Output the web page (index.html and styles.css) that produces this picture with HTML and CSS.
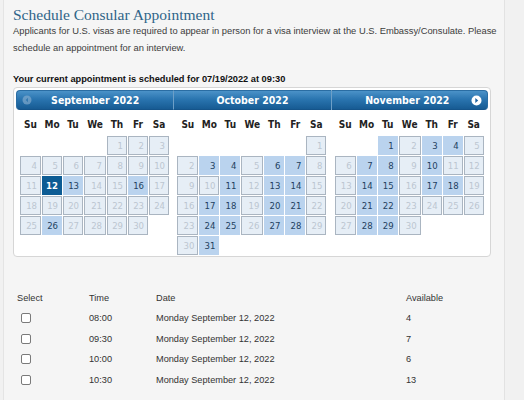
FILE: index.html
```html
<!DOCTYPE html>
<html lang="en">
<head>
<meta charset="utf-8">
<title>Schedule Consular Appointment</title>
<link rel="stylesheet" href="styles.css">
</head>
<body>
<main class="page">
  <h1 class="title">Schedule Consular Appointment</h1>
  <p class="intro">Applicants for U.S. visas are required to appear in person for a visa interview at the U.S. Embassy/Consulate. Please schedule an appointment for an interview.</p>
  <p class="current">Your current appointment is scheduled for 07/19/2022 at 09:30</p>

  <div class="datepicker">
    <section class="group first">
      <div class="dp-header">
        <span class="nav prev" title="Prev">
          <svg width="10" height="10" viewBox="0 0 10 10"><circle cx="5" cy="5" r="4.5" fill="#8fb3d2"/><path d="M6 2.8 L3.6 5 L6 7.2 Z" fill="#3f7fb3"/></svg>
        </span>
        <span class="month">September 2022</span>
      </div>
      <div class="names"><span>Su</span><span>Mo</span><span>Tu</span><span>We</span><span>Th</span><span>Fr</span><span>Sa</span></div>
      <div class="days">
        <span class="e"></span><span class="e"></span><span class="e"></span><span class="e"></span><span class="d">1</span><span class="d">2</span><span class="d">3</span>
        <span class="d">4</span><span class="d">5</span><span class="d">6</span><span class="d">7</span><span class="d">8</span><span class="d">9</span><span class="d">10</span>
        <span class="d">11</span><span class="sel">12</span><span class="a">13</span><span class="d">14</span><span class="d">15</span><span class="a">16</span><span class="d">17</span>
        <span class="d">18</span><span class="d">19</span><span class="d">20</span><span class="d">21</span><span class="d">22</span><span class="d">23</span><span class="d">24</span>
        <span class="d">25</span><span class="a">26</span><span class="d">27</span><span class="d">28</span><span class="d">29</span><span class="d">30</span>
      </div>
    </section>
    <section class="group">
      <div class="dp-header">
        <span class="month">October 2022</span>
      </div>
      <div class="names"><span>Su</span><span>Mo</span><span>Tu</span><span>We</span><span>Th</span><span>Fr</span><span>Sa</span></div>
      <div class="days">
        <span class="e"></span><span class="e"></span><span class="e"></span><span class="e"></span><span class="e"></span><span class="e"></span><span class="d">1</span>
        <span class="d">2</span><span class="a">3</span><span class="a">4</span><span class="d">5</span><span class="a">6</span><span class="a">7</span><span class="d">8</span>
        <span class="d">9</span><span class="d">10</span><span class="a">11</span><span class="d">12</span><span class="a">13</span><span class="a">14</span><span class="d">15</span>
        <span class="d">16</span><span class="a">17</span><span class="a">18</span><span class="d">19</span><span class="a">20</span><span class="a">21</span><span class="d">22</span>
        <span class="d">23</span><span class="a">24</span><span class="a">25</span><span class="d">26</span><span class="a">27</span><span class="a">28</span><span class="d">29</span>
        <span class="d">30</span><span class="a">31</span>
      </div>
    </section>
    <section class="group last">
      <div class="dp-header">
        <span class="month">November 2022</span>
        <span class="nav next" title="Next">
          <svg width="11" height="11" viewBox="0 0 11 11"><circle cx="5.5" cy="5.5" r="5" fill="#ffffff"/><path d="M4.3 3 L7.2 5.5 L4.3 8 Z" fill="#1d62a0"/></svg>
        </span>
      </div>
      <div class="names"><span>Su</span><span>Mo</span><span>Tu</span><span>We</span><span>Th</span><span>Fr</span><span>Sa</span></div>
      <div class="days">
        <span class="e"></span><span class="e"></span><span class="a">1</span><span class="d">2</span><span class="a">3</span><span class="a">4</span><span class="d">5</span>
        <span class="d">6</span><span class="a">7</span><span class="a">8</span><span class="d">9</span><span class="a">10</span><span class="d">11</span><span class="d">12</span>
        <span class="d">13</span><span class="a">14</span><span class="a">15</span><span class="d">16</span><span class="a">17</span><span class="a">18</span><span class="d">19</span>
        <span class="d">20</span><span class="a">21</span><span class="a">22</span><span class="d">23</span><span class="d">24</span><span class="d">25</span><span class="d">26</span>
        <span class="d">27</span><span class="a">28</span><span class="a">29</span><span class="d">30</span>
      </div>
    </section>
  </div>

  <table class="slots">
    <thead>
      <tr><th class="c-sel">Select</th><th class="c-time">Time</th><th class="c-date">Date</th><th>Available</th></tr>
    </thead>
    <tbody>
      <tr><td><input type="checkbox" class="check"></td><td>08:00</td><td>Monday September 12, 2022</td><td>4</td></tr>
      <tr><td><input type="checkbox" class="check"></td><td>09:30</td><td>Monday September 12, 2022</td><td>7</td></tr>
      <tr><td><input type="checkbox" class="check"></td><td>10:00</td><td>Monday September 12, 2022</td><td>6</td></tr>
      <tr><td><input type="checkbox" class="check"></td><td>10:30</td><td>Monday September 12, 2022</td><td>13</td></tr>
    </tbody>
  </table>
</main>
</body>
</html>
```
FILE: styles.css
```css
html, body {
  margin: 0;
  padding: 0;
}

body {
  background: #f1f1f1;
  font-family: "Liberation Sans", Arial, sans-serif;
  color: #333;
}

.page {
  margin-left: 3px;
  width: 491px;
  min-height: 400px;
  padding: 6px 0 0 9px;
  box-sizing: content-box;
  background: #f5f5f5;
  border-left: 1px solid #e4e4e4;
  border-right: 1px solid #e2e2e2;
}

.title {
  margin: 0;
  font-family: "Liberation Serif", "Times New Roman", serif;
  font-weight: normal;
  font-size: 15.5px;
  line-height: 18px;
  color: #2f6488;
}

.intro {
  margin: -1px 0 0;
  width: 488px;
  font-size: 9.35px;
  line-height: 17px;
  color: #3c3c3c;
}

.current {
  margin: 15px 0 0;
  font-size: 9.25px;
  font-weight: bold;
  line-height: 14px;
  color: #111;
}

/* three-month date picker */
.datepicker {
  margin-top: 1px;
  width: 472px;
  display: flex;
  padding: 2px 2px 1px;
  background: #fff;
  border: 1px solid #d6d6d6;
  border-radius: 4px;
  font-family: "DejaVu Sans Condensed", "DejaVu Sans", Verdana, sans-serif;
  font-stretch: condensed;
}

.group {
  flex: 1;
  min-width: 0;
}

.dp-header {
  position: relative;
  height: 20px;
  box-sizing: border-box;
  background: linear-gradient(to bottom, #4b92c8 0%, #2a75b0 45%, #175b93 100%);
  border-top: 1px solid #2a6da3;
  border-bottom: 1px solid #15548a;
  display: flex;
  align-items: center;
  justify-content: center;
}

.group + .group .dp-header {
  border-left: 1px solid #6d9fc7;
}

.first .dp-header {
  border-left: 1px solid #2a6da3;
  border-radius: 4px 0 0 4px;
}

.last .dp-header {
  border-right: 1px solid #2a6da3;
  border-radius: 0 4px 4px 0;
}

.month {
  color: #fff;
  font-weight: bold;
  font-size: 10.5px;
  line-height: 18px;
}

.last .month {
  margin-right: 4px;
}

.nav {
  position: absolute;
  top: 4px;
  display: flex;
}

.prev {
  left: 5px;
  opacity: 0.6;
}

.next {
  right: 5px;
  top: 3.5px;
}

.names,
.days {
  display: grid;
  grid-template-columns: 21px 20px 20px 22px 20px 20px 20px;
  column-gap: 1px;
  padding-left: 4px;
}

.names {
  margin-top: 4px;
  height: 20px;
  align-items: center;
  text-align: center;
  font-weight: bold;
  font-size: 10px;
  color: #222;
}

.days {
  margin-top: 2px;
  grid-auto-rows: 19px;
  row-gap: 1px;
  font-size: 9.5px;
}

.days span {
  box-sizing: border-box;
  display: flex;
  align-items: center;
  justify-content: flex-end;
  padding-right: 3px;
  border: 1px solid transparent;
}

.days .d {
  background: #e6eef6;
  border-color: #aab5c1;
  color: #bcc6d1;
}

.days .a {
  background: #bad3ee;
  border-color: #bad3ee;
  color: #223f60;
}

.days .sel {
  background: #0d5c94;
  border-color: #0d5c94;
  color: #fff;
  font-weight: bold;
}

/* time slots */
.slots {
  margin-top: 30.5px;
  border-collapse: collapse;
  font-size: 9.2px;
  color: #333;
}

.slots th,
.slots td {
  padding: 0 0 0 4px;
  height: 20.5px;
  text-align: left;
  font-weight: normal;
  vertical-align: middle;
}

.c-sel { width: 68px; }
.c-time { width: 63px; }
.c-date { width: 246px; }

.check {
  appearance: none;
  -webkit-appearance: none;
  display: block;
  margin: 0 0 0 4px;
  width: 10px;
  height: 10px;
  box-sizing: border-box;
  border: 1px solid #7a7a7a;
  border-radius: 2px;
  background: #fff;
}
```
